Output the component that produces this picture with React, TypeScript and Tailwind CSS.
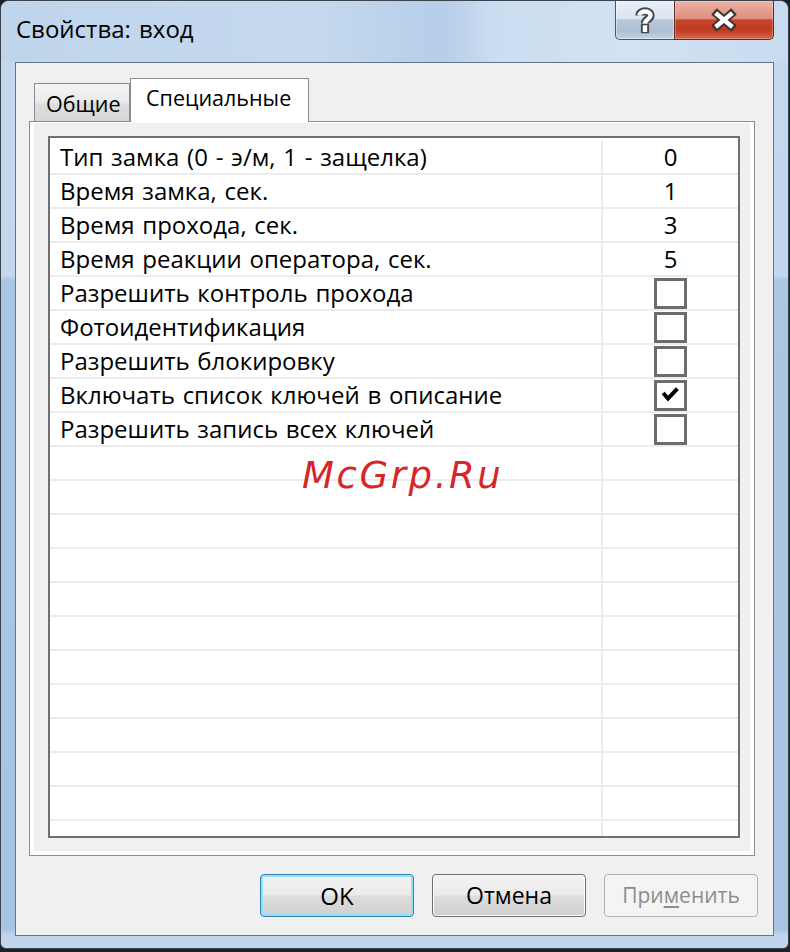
import React from "react";

type Row = { label: string; value?: string; check?: boolean };

const rows: Row[] = [
  { label: "Тип замка (0 - э/м, 1 - защелка)", value: "0" },
  { label: "Время замка, сек.", value: "1" },
  { label: "Время прохода, сек.", value: "3" },
  { label: "Время реакции оператора, сек.", value: "5" },
  { label: "Разрешить контроль прохода", check: false },
  { label: "Фотоидентификация", check: false },
  { label: "Разрешить блокировку", check: false },
  { label: "Включать список ключей в описание", check: true },
  { label: "Разрешить запись всех ключей", check: false },
];

function Checkbox({ checked }: { checked: boolean }) {
  return (
    <div className="w-[33px] h-[31px] border-[3px] border-[#6c6c6c] bg-white">
      {checked && (
        <svg width="27" height="25" viewBox="0 0 27 25" className="block">
          <path
            d="M7.5 11.5 L11 15.5 L19 7"
            fill="none"
            stroke="#000"
            strokeWidth="4"
            strokeLinecap="square"
            strokeLinejoin="miter"
          />
        </svg>
      )}
    </div>
  );
}

function HelpGlyph() {
  return (
    <svg width="24" height="28" viewBox="0 0 24 28">
      <g fill="none" stroke="#3e4753" strokeWidth="8.2">
        <path d="M6.5 9.5 C6.5 4.2 17.5 4 17.5 9.5 C17.5 13.2 12 13.2 12 17.5" strokeLinecap="butt" />
        <path d="M12 22 L12 23.2" strokeLinecap="square" />
      </g>
      <g fill="none" stroke="#ffffff" strokeWidth="4.4">
        <path d="M6.5 9.5 C6.5 4.2 17.5 4 17.5 9.5 C17.5 13.2 12 13.2 12 17.5" strokeLinecap="butt" />
        <path d="M12 21.4 L12 23.8" strokeLinecap="square" />
      </g>
    </svg>
  );
}

function CloseGlyph() {
  return (
    <svg width="28" height="24" viewBox="0 0 28 24">
      <g stroke="#3d3533" strokeWidth="8.5" strokeLinecap="butt">
        <path d="M4 3.4 L24 20.6" />
        <path d="M24 3.4 L4 20.6" />
      </g>
      <g stroke="#ffffff" strokeWidth="4.4" strokeLinecap="butt">
        <path d="M5.6 5 L22.4 19" />
        <path d="M22.4 5 L5.6 19" />
      </g>
    </svg>
  );
}

export default function App() {
  const empty = Array.from({ length: 12 });
  return (
    <div className="w-[790px] h-[952px] bg-[#1e2126] font-['Open_Sans','Noto_Sans',sans-serif] text-black">
      <div className="w-[789px] h-[949px] rounded-t-[9px] rounded-b-[6px] border border-[#39444f] overflow-hidden bg-[linear-gradient(180deg,#c4d8ee_0%,#c2d7ed_29%,#abc6e3_29.5%,#a8c4e2_98%,#bfd4eb_98.6%,#c3d7ec_100%)]">
        {/* Title bar */}
        <div className="h-[61px] flex items-start justify-between bg-[linear-gradient(90deg,#bfd5ec_0%,#c4d9ee_40%,#b6cee8_56%,#cbddf1_63%,#d2e2f3_80%,#c8dbef_100%)]">
          <div className="mt-[12px] ml-[15px] text-[24px] leading-[32px] [word-spacing:2px]">
            Свойства: вход
          </div>
          <div className="flex mr-[14px]">
            <div className="w-[59px] h-[39px] border-l border-b border-[#4d5866] rounded-bl-[5px] bg-[linear-gradient(180deg,#e8eff7_0%,#dae4ef_46%,#b8c7d8_50%,#afc0d3_80%,#c4d3e3_100%)] shadow-[inset_0_0_0_1px_rgba(255,255,255,0.45)] flex items-center justify-center">
              <HelpGlyph />
            </div>
            <div className="w-[100px] h-[39px] border-l border-r border-b border-[#5e2b22] rounded-br-[5px] bg-[linear-gradient(180deg,#ebb4a7_0%,#df8e7c_46%,#c8442c_50%,#c03a22_76%,#d6664a_100%)] shadow-[inset_0_0_0_1px_rgba(255,220,210,0.35)] flex items-center justify-center">
              <CloseGlyph />
            </div>
          </div>
        </div>

        {/* Client area */}
        <div className="mx-[14px] h-[874px] border border-[#667485] bg-[#f0f0f0] flex flex-col pt-[15px]">
          {/* Tabs */}
          <div className="ml-[13px] w-[726px]">
            <div className="flex items-end h-[43px] pl-[5px]">
              <div className="w-[96px] h-[38px] border-t border-l border-r border-[#898c95] bg-[linear-gradient(180deg,#f4f4f4_0%,#ebebeb_45%,#dedede_55%,#d6d6d6_100%)] flex items-center pl-[11px] pt-[3px] text-[21.5px] leading-none">
                Общие
              </div>
              <div className="relative z-10 -mb-px w-[179px] h-[44px] border-t border-l border-r border-[#898c95] bg-white flex items-center pl-[15px] pb-[5px] text-[21.5px] leading-none">
                Специальные
              </div>
            </div>

            {/* Panel */}
            <div className="h-[735px] border border-[#898c95] bg-[#f0f0f0] shadow-[inset_4px_0_0_#ffffff,inset_-4px_0_0_#ffffff,inset_0_-4px_0_#ffffff,inset_0_1px_0_#ffffff] pt-[14px] pl-[18px]">
              <div className="relative w-[692px] h-[702px] border-2 border-[#707070] bg-white overflow-hidden">
                {rows.map((r, i) => (
                  <div
                    key={i}
                    className={
                      i === 0
                        ? "flex h-[37px] pt-[3px] border-b-2 border-[#ececec]"
                        : "flex h-[34px] border-b-2 border-[#ececec]"
                    }
                  >
                    <div className="w-[553px] shrink-0 border-r-2 border-[#ececec] pl-[10px] flex items-center text-[24px] leading-none whitespace-nowrap [word-spacing:1.5px]">
                      {r.label}
                    </div>
                    <div className="flex-1 flex items-center justify-center text-[24px] leading-none">
                      {r.value !== undefined ? r.value : <Checkbox checked={!!r.check} />}
                    </div>
                  </div>
                ))}
                {empty.map((_, i) => (
                  <div key={"e" + i} className="flex h-[34px] border-b-2 border-[#ececec]">
                    <div className="w-[553px] shrink-0 border-r-2 border-[#ececec]" />
                    <div className="flex-1" />
                  </div>
                ))}
                <div className="absolute left-[252px] top-[319px] pointer-events-none font-['DejaVu_Sans',sans-serif] italic text-[37px] leading-none tracking-[2.6px] text-[#d6262a] whitespace-nowrap">
                  McGrp.Ru
                </div>
              </div>
            </div>
          </div>

          {/* Buttons */}
          <div className="mt-[18px] flex justify-end gap-[18px] pr-[15px]">
            <div className="w-[154px] h-[43px] rounded-[4px] border border-[#3c7fb1] bg-[linear-gradient(180deg,#f3f3f3_0%,#ebebeb_48%,#dddddd_52%,#cfcfcf_100%)] shadow-[inset_0_0_0_2px_#8fe1f8] flex items-center justify-center text-[24px] leading-none">
              OK
            </div>
            <div className="w-[154px] h-[43px] rounded-[4px] border border-[#707070] bg-[linear-gradient(180deg,#f3f3f3_0%,#ebebeb_48%,#dddddd_52%,#cfcfcf_100%)] shadow-[inset_0_0_0_1px_#fbfbfb] flex items-center justify-center text-[23px] leading-none">
              Отмена
            </div>
            <div className="w-[154px] h-[43px] rounded-[4px] border border-[#adb2b5] bg-[#f4f4f4] flex items-center justify-center text-[21px] leading-none text-[#8d8d8d]">
              При<span className="underline underline-offset-[3px]">м</span>енить
            </div>
          </div>
        </div>
      </div>
    </div>
  );
}
